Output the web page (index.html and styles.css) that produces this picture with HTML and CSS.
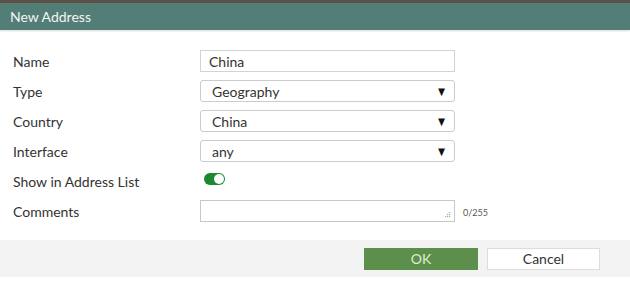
FILE: index.html
```html
<!DOCTYPE html>
<html>
<head>
<meta charset="utf-8">
<link rel="stylesheet" href="styles.css">
</head>
<body>
<div class="dialog">
  <div class="topstrip"></div>
  <div class="header">New Address</div>
  <div class="form">
    <div class="row">
      <div class="label">Name</div>
      <div class="field input">China</div>
    </div>
    <div class="row">
      <div class="label">Type</div>
      <div class="field select"><span>Geography</span><span class="arrow">▼</span></div>
    </div>
    <div class="row">
      <div class="label">Country</div>
      <div class="field select"><span>China</span><span class="arrow">▼</span></div>
    </div>
    <div class="row">
      <div class="label">Interface</div>
      <div class="field select"><span>any</span><span class="arrow">▼</span></div>
    </div>
    <div class="row">
      <div class="label">Show in Address List</div>
      <div class="toggle"><div class="knob"></div></div>
    </div>
    <div class="row">
      <div class="label">Comments</div>
      <div class="field textarea">
        <svg class="grip" width="6" height="6" viewBox="0 0 6 6"><rect x="4" y="0" width="1.2" height="1.2" fill="#aaa"/><rect x="2" y="2" width="1.2" height="1.2" fill="#aaa"/><rect x="4" y="2" width="1.2" height="1.2" fill="#aaa"/><rect x="0" y="4" width="1.2" height="1.2" fill="#aaa"/><rect x="2" y="4" width="1.2" height="1.2" fill="#aaa"/><rect x="4" y="4" width="1.2" height="1.2" fill="#aaa"/></svg>
      </div>
      <div class="count">0/255</div>
    </div>
  </div>
  <div class="footer">
    <div class="btn ok">OK</div>
    <div class="btn cancel">Cancel</div>
  </div>
</div>
</body>
</html>
```
FILE: styles.css
```css
* { box-sizing: border-box; }
html, body { margin: 0; padding: 0; background: #fff; }
body {
  font-family: Lato, "Open Sans", "Liberation Sans", sans-serif;
  color: #333;
  width: 630px;
  height: 307px;
  overflow: hidden;
}
.dialog { display: flex; flex-direction: column; }
.topstrip { height: 3px; background: #5b5046; }
.header {
  height: 27px;
  background: #527e77;
  color: #f2f5f4;
  font-size: 14px;
  padding-left: 10px;
  display: flex;
  align-items: center;
  box-shadow: 0 1px 2px rgba(0,0,0,0.15);
}
.form {
  padding: 20px 0 0 13px;
  display: flex;
  flex-direction: column;
  gap: 8px;
  height: 210px;
}
.row {
  display: flex;
  align-items: center;
  height: 22px;
}
.label {
  width: 187px;
  font-size: 14px;
  color: #333;
}
.field {
  width: 255px;
  height: 22px;
  border: 1px solid #ccc;
  background: #fff;
  font-size: 14px;
  color: #333;
  display: flex;
  align-items: center;
}
.input { padding-left: 8px; border-color: #d3d3d3; }
.select {
  border-radius: 3px;
  padding: 0 6px 0 11px;
  justify-content: space-between;
}
.arrow { font-size: 13px; color: #111; transform: scaleX(0.9); }
.toggle {
  margin-left: 4px;
  margin-bottom: 4px;
  width: 21px;
  height: 12px;
  border-radius: 6px;
  background: #1b8a2c;
  display: flex;
  align-items: center;
  justify-content: flex-end;
  padding-right: 1px;
}
.knob {
  width: 10px;
  height: 10px;
  border-radius: 50%;
  background: #fff;
}
.textarea {
  position: relative;
  border-color: #c8c8c8;
}
.grip { position: absolute; right: 3px; bottom: 3px; }
.count {
  margin-left: 8px;
  font-size: 9px;
  color: #555;
  margin-top: 2px;
}
.footer {
  height: 37px;
  background: #f3f3f3;
  display: flex;
  align-items: center;
  padding-left: 364px;
  gap: 9px;
}
.btn {
  width: 114px;
  height: 22px;
  font-size: 14px;
  display: flex;
  align-items: center;
  justify-content: center;
}
.ok { background: #5c8f4b; color: #dcf0cf; }
.cancel { background: #fff; border: 1px solid #ddd; color: #333; width: 113px; }
```
